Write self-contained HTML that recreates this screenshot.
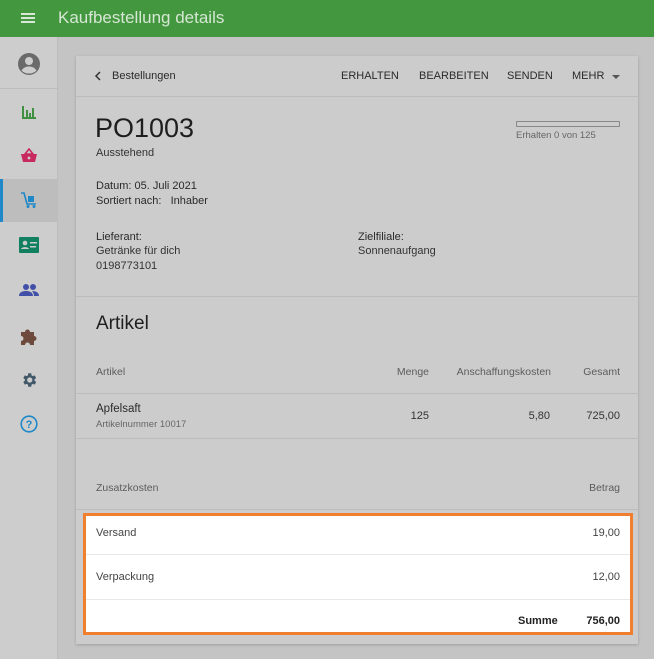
<!DOCTYPE html>
<html><head><meta charset="utf-8"><style>
*{margin:0;padding:0;box-sizing:border-box}
body{width:654px;height:659px;overflow:hidden;background:#c4c4c4;font-family:"Liberation Sans",sans-serif;position:relative;color:#222}
.a{position:absolute;white-space:nowrap}
.hdr{left:0;top:0;width:654px;height:37px;background:#43983f}
.side{left:0;top:37px;width:58px;height:622px;background:#cdcdcd;border-right:1px solid #bdbdbd}
.card{left:76px;top:56px;width:562px;height:588px;background:#cccccc;box-shadow:0 1px 3px rgba(0,0,0,.2)}
.hr{position:absolute;left:76px;width:562px;height:1px;background:#bcbcbc}
.t{font-size:11px;color:#2a2a2a}
.g{font-size:10.5px;color:#5c5c5c}
.r{text-align:right}
.btn{font-size:11px;color:#2a2a2a;top:70px}
</style></head><body>
<div class="a hdr"></div>
<div class="a" style="left:21px;top:13px;width:14px;height:2px;background:#d8e8d6;box-shadow:0 4px 0 #d8e8d6,0 8px 0 #d8e8d6"></div>
<div class="a" style="left:58px;top:8px;font-size:17px;color:#d6e6d4">Kaufbestellung details</div>
<div class="a side"></div>
<div class="a" style="left:0;top:88px;width:58px;height:1px;background:#bcbcbc"></div>
<svg class="a" style="left:17px;top:52px" width="24" height="24" viewBox="0 0 24 24"><circle cx="12" cy="12" r="11" fill="#6a6a6a"/><circle cx="12" cy="9" r="4" fill="#cdcdcd"/><path d="M4.5 18.5c2-3 4.5-4 7.5-4s5.5 1 7.5 4c-2 2-4.5 3-7.5 3s-5.5-1-7.5-3z" fill="#cdcdcd"/></svg>
<svg class="a" style="left:21px;top:104px" width="16" height="16" viewBox="0 0 16 16"><path d="M1 2v13h14v-2H3V2z M5 6h2v7H5z M8 9h2v4H8z M11 4h2v9h-2z" fill="#3f9040"/></svg>
<svg class="a" style="left:20px;top:148px" width="18" height="16" viewBox="0 0 18 16"><path d="M5 6l4-5 4 5z" fill="none" stroke="#c82a60" stroke-width="1.6"/><path d="M1 6h16l-2 8H3z" fill="#c82a60"/><circle cx="9" cy="10" r="1.4" fill="#cdcdcd"/></svg>
<div class="a" style="left:0;top:179px;width:58px;height:43px;background:#bdbdbd"></div>
<div class="a" style="left:0;top:179px;width:3px;height:43px;background:#1e88c8"></div>
<svg class="a" style="left:20px;top:191px" width="18" height="18" viewBox="0 0 18 18"><path d="M1 2h3l3 11h9" fill="none" stroke="#1e88c8" stroke-width="1.6"/><rect x="8" y="5" width="6" height="6" fill="#1e88c8"/><circle cx="8" cy="15.5" r="1.5" fill="#1e88c8"/><circle cx="14" cy="15.5" r="1.5" fill="#1e88c8"/></svg>
<svg class="a" style="left:19px;top:237px" width="20" height="16" viewBox="0 0 20 16"><rect x="0" y="0" width="20" height="16" rx="1" fill="#108060"/><circle cx="6" cy="6" r="2.3" fill="#cdcdcd"/><path d="M2 12c1-2.5 7-2.5 8 0z" fill="#cdcdcd"/><rect x="11" y="5" width="7" height="1.5" fill="#cdcdcd"/><rect x="11" y="9" width="6" height="1.5" fill="#cdcdcd"/></svg>
<svg class="a" style="left:19px;top:283px" width="20" height="14" viewBox="0 0 20 14"><circle cx="7" cy="4" r="3" fill="#4050a8"/><circle cx="14" cy="4" r="3" fill="#4050a8"/><path d="M0 13c0-4 4-5 7-5s7 1 7 5z M13 8c3 0 7 1 7 5h-5c0-2-1-4-2-5z" fill="#4050a8"/></svg>
<svg class="a" style="left:20px;top:327px" width="18" height="18" viewBox="0 0 18 18"><path d="M1 5h4a2.5 2.5 0 0 1 5 0h4v4a2.5 2.5 0 0 1 0 5v4H10a2.5 2.5 0 0 0-5 0H1v-4a2.5 2.5 0 0 0 0-5z" fill="#6e4a3c"/></svg>
<svg class="a" style="left:20px;top:371px" width="18" height="18" viewBox="0 0 24 24"><path fill="#405868" d="M19.4 13a7.5 7.5 0 0 0 0-2l2.1-1.6-2-3.5-2.5 1a7 7 0 0 0-1.7-1L15 3h-4l-.4 2.9a7 7 0 0 0-1.700 1l-2.5-1-2 3.5L6.5 11a7.5 7.5 0 0 0 0 2l-2.1 1.6 2 3.5 2.5-1a7 7 0 0 0 1.7 1L11 21h4l.4-2.9a7 7 0 0 0 1.7-1l2.5 1 2-3.5zM13 15.5a3.5 3.5 0 1 1 0-7 3.5 3.5 0 0 1 0 7z"/></svg>
<svg class="a" style="left:20px;top:415px" width="18" height="18" viewBox="0 0 18 18"><circle cx="9" cy="9" r="7.8" fill="none" stroke="#1e88c8" stroke-width="1.6"/><text x="9" y="13" font-size="11" font-weight="bold" text-anchor="middle" fill="#1e88c8" font-family="Liberation Sans">?</text></svg>

<div class="a card"></div>
<svg class="a" style="left:94px;top:71px" width="8" height="10" viewBox="0 0 8 10"><path d="M6 1L2 5l4 4" fill="none" stroke="#333" stroke-width="1.5"/></svg>
<div class="a t" style="left:112px;top:70px">Bestellungen</div>
<div class="a btn" style="left:341px">ERHALTEN</div>
<div class="a btn" style="left:419px">BEARBEITEN</div>
<div class="a btn" style="left:507px">SENDEN</div>
<div class="a btn" style="left:572px">MEHR</div>
<div class="a" style="left:612px;top:75px;border:4px solid transparent;border-top:4px solid #555;border-bottom:0"></div>
<div class="hr" style="top:96px"></div>
<div class="a" style="left:95px;top:113px;font-size:27px;color:#1e1e1e">PO1003</div>
<div class="a t" style="left:96px;top:147px;color:#333">Ausstehend</div>
<div class="a" style="left:516px;top:121px;width:104px;height:6px;border:1px solid #888;border-radius:1px"></div>
<div class="a" style="left:516px;top:130px;font-size:9.5px;color:#666">Erhalten 0 von 125</div>
<div class="a t" style="left:96px;top:180px">Datum: 05. Juli 2021</div>
<div class="a t" style="left:96px;top:195px">Sortiert nach: &nbsp; Inhaber</div>
<div class="a t" style="left:96px;top:231px">Lieferant:</div>
<div class="a t" style="left:96px;top:245px;color:#333">Getränke für dich</div>
<div class="a t" style="left:96px;top:260px;color:#333">0198773101</div>
<div class="a t" style="left:358px;top:231px">Zielfiliale:</div>
<div class="a t" style="left:358px;top:245px;color:#333">Sonnenaufgang</div>
<div class="hr" style="top:296px"></div>
<div class="a" style="left:96px;top:313px;font-size:19px;color:#1e1e1e">Artikel</div>
<div class="a g" style="left:96px;top:366px">Artikel</div>
<div class="a g r" style="left:329px;width:100px;top:366px">Menge</div>
<div class="a g r" style="left:430px;width:121px;top:366px">Anschaffungskosten</div>
<div class="a g r" style="left:540px;width:80px;top:366px">Gesamt</div>
<div class="hr" style="top:393px"></div>
<div class="a t" style="left:96px;top:403px;font-size:11.5px">Apfelsaft</div>
<div class="a" style="left:96px;top:419px;font-size:9.5px;color:#666">Artikelnummer 10017</div>
<div class="a t r" style="left:329px;width:100px;top:410px;color:#333">125</div>
<div class="a t r" style="left:450px;width:100px;top:410px;color:#333">5,80</div>
<div class="a t r" style="left:520px;width:100px;top:410px;color:#333">725,00</div>
<div class="hr" style="top:438px"></div>
<div class="a g" style="left:96px;top:482px">Zusatzkosten</div>
<div class="a g r" style="left:520px;width:100px;top:482px">Betrag</div>
<div class="hr" style="top:509px"></div>

<div class="a" style="left:83px;top:513px;width:550px;height:122px;background:#fff;border:3px solid #f08030"></div>
<div class="a" style="left:86px;top:554px;width:544px;height:1px;background:#e8e8e8"></div>
<div class="a" style="left:86px;top:599px;width:544px;height:1px;background:#e8e8e8"></div>
<div class="a t" style="left:96px;top:527px;color:#444">Versand</div>
<div class="a t r" style="left:520px;width:100px;top:527px;color:#444">19,00</div>
<div class="a t" style="left:96px;top:571px;color:#444">Verpackung</div>
<div class="a t r" style="left:520px;width:100px;top:571px;color:#444">12,00</div>
<div class="a t" style="left:518px;top:615px;font-weight:bold;color:#222">Summe</div>
<div class="a t r" style="left:520px;width:100px;top:615px;font-weight:bold;color:#222">756,00</div>
</body></html>
